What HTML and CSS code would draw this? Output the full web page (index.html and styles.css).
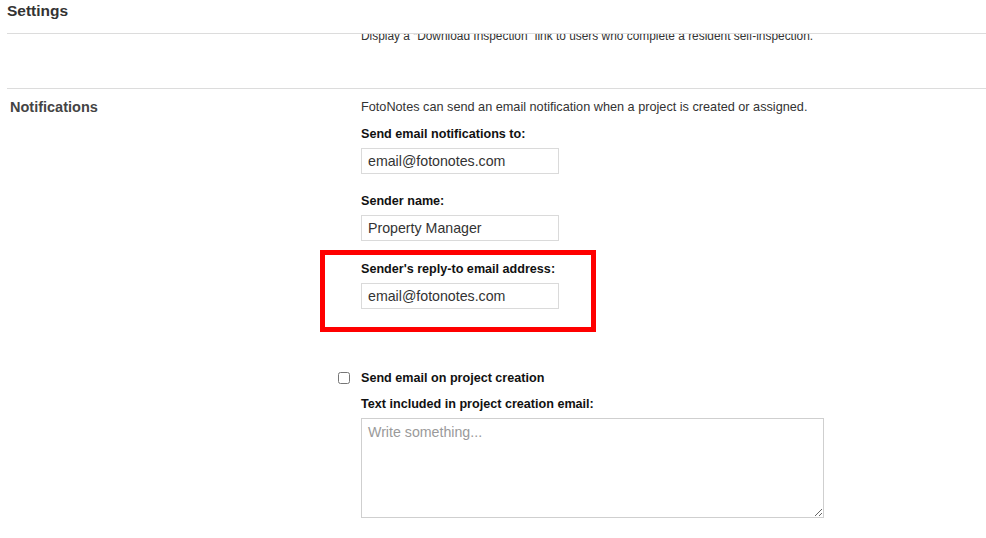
FILE: index.html
```html
<!DOCTYPE html>
<html lang="en">
<head>
  <meta charset="UTF-8" />
  <meta name="viewport" content="width=device-width, initial-scale=1.0" />
  <title>Settings</title>
  <link rel="stylesheet" href="styles.css">
</head>
<body>
  <header class="page-header">
    <h1>Settings</h1>
  </header>

  <main class="settings">
    <section class="setting-row setting-row-first">
      <div class="setting-name"></div>
      <div class="setting-body">
        <p class="help">Display a “Download Inspection” link to users who complete a resident self-inspection.</p>
      </div>
    </section>

    <section class="setting-row">
      <h2 class="setting-name">Notifications</h2>
      <div class="setting-body">
        <p class="help">FotoNotes can send an email notification when a project is created or assigned.</p>

        <div class="field">
          <label for="notify-to">Send email notifications to:</label>
          <input type="text" id="notify-to" value="email@fotonotes.com" />
        </div>

        <div class="field">
          <label for="sender-name">Sender name:</label>
          <input type="text" id="sender-name" value="Property Manager" />
        </div>

        <div class="field field-highlight">
          <label for="reply-to">Sender's reply-to email address:</label>
          <input type="text" id="reply-to" value="email@fotonotes.com" />
        </div>

        <label class="check">
          <input type="checkbox" id="on-create" />
          Send email on project creation
        </label>

        <div class="field field-text">
          <label for="create-text">Text included in project creation email:</label>
          <textarea id="create-text" placeholder="Write something..."></textarea>
        </div>
      </div>
    </section>
  </main>
</body>
</html>
```

FILE: styles.css
```css
body {
  font-family: 'Liberation Sans', Arial, sans-serif;
  margin: 0;
  padding: 0;
  background: #ffffff;
  color: #333;
  overflow: hidden;
}
.page-header {
  margin-left: 7px;
  padding-bottom: 11px;
  border-bottom: 1px solid #dcdcdc;
  background: #ffffff;
}
.page-header h1 {
  margin: 0;
  font-size: 15.5px;
  line-height: 22px;
  color: #333;
}
.settings {
  margin-left: 7px;
  height: 504px;
  overflow: hidden;
}
.setting-row {
  display: grid;
  grid-template-columns: 354px 1fr;
  border-bottom: 1px solid #dcdcdc;
  padding-top: 10px;
}
.setting-row-first {
  margin-top: -16px;
  padding-bottom: 44px;
}
.setting-row:last-child {
  border-bottom: none;
}
.setting-name {
  margin: 0;
  padding-left: 3px;
  font-size: 14.5px;
  line-height: 16px;
  font-weight: bold;
  color: #444;
}
.help {
  margin: 0 0 10px;
  font-size: 12.7px;
  line-height: 16px;
  color: #333;
}
.setting-row-first .help {
  margin: 0;
  font-size: 11.9px;
}
.field {
  margin-bottom: 18px;
}
.field label,
.check {
  display: block;
  padding-top: 1px;
  margin-bottom: 6px;
  font-size: 12.6px;
  line-height: 16px;
  font-weight: bold;
  color: #111;
}
.field input {
  display: block;
  box-sizing: border-box;
  width: 198px;
  height: 26px;
  margin: 0;
  padding: 0 6px;
  border: 1px solid #dadada;
  border-radius: 0;
  font-family: 'Liberation Sans', Arial, sans-serif;
  font-size: 14.2px;
  color: #333;
}
.field-highlight {
  width: 198px;
  margin: -9px 0 38px -41px;
  padding: 5px 32px 18px 36px;
  border: 5px solid #ff0000;
}
.check {
  display: flex;
  align-items: center;
  padding-top: 0;
  margin: 0 0 9px -23px;
}
.check input {
  width: 12px;
  height: 12px;
  margin: 0 11px 0 0;
}
.field textarea {
  display: block;
  box-sizing: border-box;
  width: 463px;
  height: 100px;
  margin: 0;
  padding: 5px 6px;
  border: 1px solid #cfcfcf;
  border-radius: 0;
  font-family: 'Liberation Sans', Arial, sans-serif;
  font-size: 14.2px;
  color: #333;
}
.field textarea::placeholder {
  color: #9a9a9a;
}
```
